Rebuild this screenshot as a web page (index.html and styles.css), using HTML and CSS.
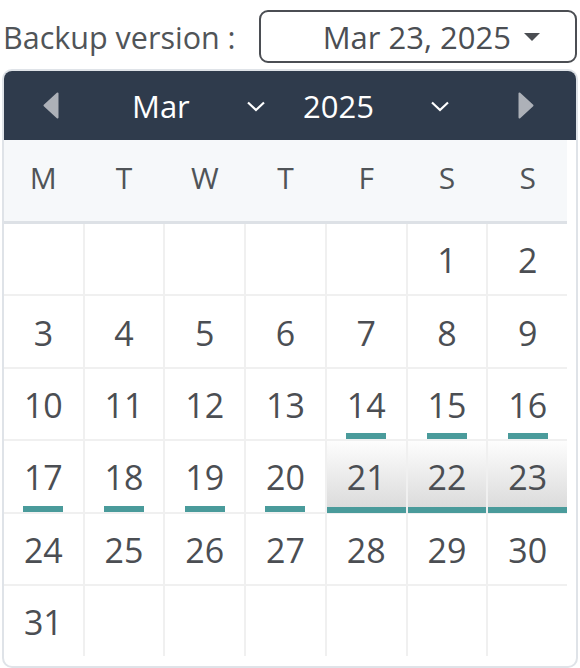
FILE: index.html
```html
<!DOCTYPE html>
<html lang="en">
<head>
  <meta charset="UTF-8" />
  <meta name="viewport" content="width=device-width, initial-scale=1.0"/>
  <title>Backup version</title>
  <link rel="stylesheet" href="styles.css">
</head>
<body>

  <div class="version-row">
    <span class="version-label">Backup version :</span>
    <button class="picker">
      <span>Mar 23, 2025</span>
      <svg class="caret" width="16" height="8" viewBox="0 0 16 8"><path d="M0 0 H16 L8 8 Z" fill="#4b4e53"/></svg>
    </button>
  </div>

  <div class="calendar">
    <div class="cal-head">
      <svg class="nav prev" width="16" height="27" viewBox="0 0 16 27"><path d="M14.5 1.5 V25.5 L1.5 13.5 Z" fill="#adb1b8" stroke="#adb1b8" stroke-width="2" stroke-linejoin="round"/></svg>
      <div class="select month">
        <span>Mar</span>
        <svg width="20" height="11" viewBox="0 0 20 11"><path d="M2 1.5 L10 9 L18 1.5" fill="none" stroke="#fff" stroke-width="2.2"/></svg>
      </div>
      <div class="select year">
        <span>2025</span>
        <svg width="20" height="11" viewBox="0 0 20 11"><path d="M2 1.5 L10 9 L18 1.5" fill="none" stroke="#fff" stroke-width="2.2"/></svg>
      </div>
      <svg class="nav next" width="16" height="27" viewBox="0 0 16 27"><path d="M1.5 1.5 V25.5 L14.5 13.5 Z" fill="#adb1b8" stroke="#adb1b8" stroke-width="2" stroke-linejoin="round"/></svg>
    </div>

    <div class="cal-body">
      <div class="weekdays">
        <span>M</span><span>T</span><span>W</span><span>T</span><span>F</span><span>S</span><span>S</span>
      </div>
      <div class="days" id="days"></div>
    </div>
  </div>

  <script>
    // March 2025 starts on a Saturday
    const days = document.getElementById("days");
    const marked = [14, 15, 16, 17, 18, 19, 20];
    const selected = [21, 22, 23];

    for (let i = 0; i < 42; i++) {
      const day = i - 4;
      const cell = document.createElement("div");
      cell.className = "day";
      if (day >= 1 && day <= 31) {
        cell.textContent = day;
        if (marked.includes(day)) cell.classList.add("marked");
        if (selected.includes(day)) cell.classList.add("selected");
      }
      days.appendChild(cell);
    }
  </script>

</body>
</html>
```

FILE: styles.css
```css
body {
  margin: 0;
  font-family: "Open Sans", sans-serif;
  color: #4b4e53;
}

.version-row {
  display: flex;
  align-items: center;
  padding-top: 10px;
  height: 53px;
}

.version-label {
  margin-left: 3px;
  font-size: 30.5px;
  color: #505458;
}

.picker {
  margin-left: auto;
  margin-right: 3px;
  width: 318px;
  height: 53px;
  box-sizing: border-box;
  display: flex;
  align-items: center;
  justify-content: flex-end;
  gap: 13px;
  padding: 0 35px 0 0;
  background: #fff;
  border: 2px solid #4b4e53;
  border-radius: 9px;
  font-family: "Open Sans", sans-serif;
  font-size: 31px;
  color: #4b4e53;
}

.calendar {
  margin: 6px 0 0 2px;
  width: 576px;
  height: 599px;
  box-sizing: border-box;
  border: 2px solid #dfe3e8;
  border-radius: 10px;
  background: #fff;
  overflow: hidden;
}

.cal-head {
  display: flex;
  align-items: center;
  height: 69px;
  background: #2f3b4c;
  color: #fff;
  font-size: 31px;
}

.nav.prev {
  margin-left: 39px;
}

.select {
  display: flex;
  align-items: center;
  justify-content: space-between;
}

.select svg {
  margin-top: 2px;
}

.month {
  margin-left: 73px;
  width: 134px;
}

.year {
  margin-left: 37px;
  width: 147px;
}

.nav.next {
  margin-left: 68px;
}

.cal-body {
  padding-right: 9px;
}

.weekdays {
  display: grid;
  grid-template-columns: repeat(7, 1fr);
  column-gap: 2px;
  align-items: center;
  box-sizing: border-box;
  height: 84px;
  padding-bottom: 7px;
  background: #f6f8fa;
  border-bottom: 3px solid #dde1e6;
  font-size: 30px;
  color: #505458;
}

.weekdays span {
  text-align: center;
}

.days {
  display: grid;
  grid-template-columns: repeat(7, 1fr);
  grid-auto-rows: 70.4px;
  gap: 2px;
  background: #f0f0f0;
}

.day {
  position: relative;
  display: flex;
  align-items: center;
  justify-content: center;
  padding-top: 2px;
  background: #fff;
  font-size: 34px;
  color: #4b4e53;
}

.day.marked::after {
  content: "";
  position: absolute;
  bottom: 0;
  left: 50%;
  width: 40px;
  height: 6px;
  margin-left: -20px;
  background: #4a9b9b;
}

.day.selected {
  background: linear-gradient(#fdfdfd, #d9d9d9);
}

.day.selected::after {
  content: "";
  position: absolute;
  bottom: -1px;
  left: 0;
  right: 0;
  height: 6px;
  background: #4a9b9b;
}
```
